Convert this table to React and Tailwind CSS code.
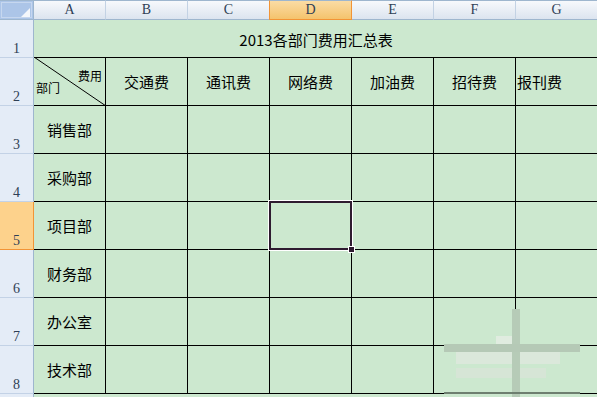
export default function App() {
  const cols = ['A', 'B', 'C', 'D', 'E', 'F', 'G'];
  const heads = ['交通费', '通讯费', '网络费', '加油费', '招待费'];
  const depts = ['销售部', '采购部', '项目部', '财务部', '办公室', '技术部'];
  const rowHead = "flex items-end justify-center bg-[#e4ecf7] border-r border-b border-r-[#9eb6ce] border-b-[#c3d2e6] text-[14px] leading-[16px] text-[#2f3f55] font-['Liberation_Serif',serif]";
  const cell = 'border-r border-b border-black';
  return (
    <div className="relative w-[597px] h-[397px] overflow-hidden bg-[#cce8cf] font-['Noto_Sans_CJK_SC','Liberation_Sans',sans-serif] text-black">
      <div className="grid w-[598px] grid-cols-[34px_72px_82px_82px_82px_82px_82px_82px] grid-rows-[20px_38px_repeat(7,48px)_20px]">
        {/* header row */}
        <div className="relative bg-[#acc5e8] border-t border-r border-b border-t-[#9eb6ce] border-r-[#9eb6ce] border-b-[#9eb6ce]">
          <div className="absolute inset-[1px] border border-[#c6d7ef]" />
          <svg className="absolute left-0 top-0" width="34" height="20" viewBox="0 0 34 20">
            <polygon points="21,16 30,16 30,7" fill="#f4f7fb" />
          </svg>
        </div>
        {cols.map((c) =>
          c === 'D' ? (
            <div key={c} className="flex justify-center pt-[1px] bg-linear-to-b from-[#fbdca4] to-[#f4c36c] border-t border-t-[#9eb6ce] border-l border-r border-b border-l-[#f29436] border-r-[#f29436] border-b-[#f29436] -ml-px text-[14px] leading-[16px] text-[#2f3f55] font-['Liberation_Serif',serif]">
              {c}
            </div>
          ) : (
            <div key={c} className="flex justify-center pt-[1px] bg-linear-to-b from-[#f7f9fc] to-[#dce4ef] border-t border-r border-b border-t-[#9eb6ce] border-r-[#c3d2e4] border-b-[#9eb6ce] text-[14px] leading-[16px] text-[#2f3f55] font-['Liberation_Serif',serif]">
              {c}
            </div>
          )
        )}

        {/* row 1 */}
        <div className={rowHead}>1</div>
        <div className="col-span-7 flex items-center justify-center pt-[3px] border-b border-black text-[15px] leading-[18px]">
          2013各部门费用汇总表
        </div>

        {/* row 2 */}
        <div className={rowHead}>2</div>
        <div className={`${cell} relative`}>
          <svg className="absolute left-0 top-[-1px]" width="72" height="49" viewBox="0 0 72 49">
            <line x1="0" y1="0" x2="72" y2="49" stroke="#000" strokeWidth="1" />
          </svg>
          <span className="absolute left-[44px] top-[11px] text-[12px] leading-[14px]">费用</span>
          <span className="absolute left-[2px] top-[23px] text-[12px] leading-[14px]">部门</span>
        </div>
        {heads.map((h) => (
          <div key={h} className={`${cell} flex items-center justify-center text-[15px] leading-[18px]`}>
            {h}
          </div>
        ))}
        <div className={`${cell} flex items-center pl-[1px] text-[15px] leading-[18px]`}>报刊费</div>

        {/* rows 3-8 */}
        {depts.map((d, i) => (
          <div key={d} className="contents">
            <div
              className={
                i === 2
                  ? "flex items-end justify-center bg-[#fdd28c] border-r border-b border-r-[#f29436] border-b-[#f29436] text-[14px] leading-[16px] text-[#2f3f55] font-['Liberation_Serif',serif]"
                  : rowHead
              }
            >
              {i + 3}
            </div>
            <div className={`${cell} flex items-center justify-center text-[15px] leading-[18px]`}>{d}</div>
            <div className={cell} />
            <div className={cell} />
            <div className={cell} />
            <div className={cell} />
            <div className={cell} />
            <div className={cell} />
          </div>
        ))}

        {/* row 9 partial */}
        <div className={rowHead}></div>
        <div className="col-span-7" />
      </div>

      {/* selection */}
      <div className="absolute left-[268px] top-[200px] w-[85px] h-[51px] border border-white">
        <div className="w-full h-full border-2 border-[#2e1b30]" />
      </div>
      <div className="absolute left-[348px] top-[246px] w-[7px] h-[7px] border border-white bg-[#2e1b30]" />

      {/* faint watermark */}
      <div className="absolute left-[496px] top-[336px] w-[24px] h-[8px] bg-[#e0ece0]" />
      <div className="absolute left-[456px] top-[352px] w-[104px] h-[12px] bg-[#dbe8db]" />
      <div className="absolute left-[456px] top-[368px] w-[90px] h-[10px] bg-[#d6e5d6]" />
      <div className="absolute left-[512px] top-[309px] w-[8px] h-[88px] bg-[#b6cbb7]" />
      <div className="absolute left-[444px] top-[344px] w-[136px] h-[8px] bg-[#b5c9b6]" />
      <div className="absolute left-[444px] top-[392px] w-[136px] h-[2px] bg-[#6e7f70]" />
    </div>
  );
}
